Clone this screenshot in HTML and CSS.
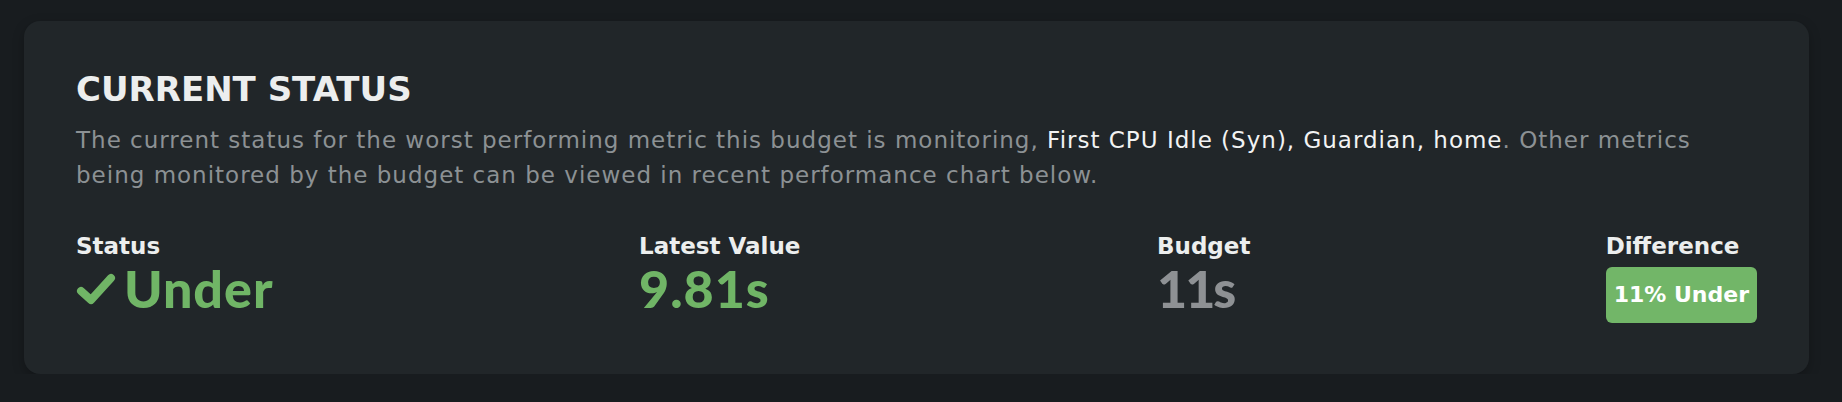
FILE: index.html
```html
<!DOCTYPE html>
<html lang="en">
<head>
  <meta charset="UTF-8">
  <title>Current Status</title>
  <link rel="stylesheet" href="styles.css">
</head>
<body>
  <div class="card">
    <h2>CURRENT STATUS</h2>
    <p class="desc">
      The current status for the worst performing metric this budget is monitoring,
      <span class="hl">First CPU Idle (Syn), Guardian, home</span>. Other metrics
      being monitored by the budget can be viewed in recent performance chart below.
    </p>

    <div class="stats">
      <div class="stat">
        <div class="label">Status</div>
        <div class="value good">
          <svg class="check" width="40" height="34" viewBox="0 0 40 34">
            <polyline points="5,20 15,29 35,7" fill="none" stroke="currentColor" stroke-width="8" stroke-linecap="round" stroke-linejoin="round"/>
          </svg>
          Under
        </div>
      </div>
      <div class="stat">
        <div class="label">Latest Value</div>
        <div class="value good">9.81s</div>
      </div>
      <div class="stat">
        <div class="label">Budget</div>
        <div class="value muted">11s</div>
      </div>
      <div class="stat">
        <div class="label">Difference</div>
        <div class="badge">11% Under</div>
      </div>
    </div>
  </div>
</body>
</html>
```

FILE: styles.css
```css
body {
  font-family: "DejaVu Sans", sans-serif;
  background-color: #181c1f;
  margin: 0;
  padding: 21px 33px 0 24px;
}
.card {
  background: #212629;
  border-radius: 16px;
  padding: 48px 52px 0;
  height: 353px;
  box-sizing: border-box;
  box-shadow: 0 4px 12px rgba(0,0,0,0.25);
}
h2 {
  margin: 0;
  font-size: 34px;
  line-height: 40px;
  font-weight: bold;
  color: #eceeee;
}
.desc {
  margin: 14px 0 0;
  font-size: 23px;
  line-height: 35px;
  letter-spacing: 1px;
  color: #8c9194;
}
.hl {
  color: #f2f3f3;
}
.stats {
  display: grid;
  grid-template-columns: 563px 518px 1fr auto;
  margin-top: 39px;
}
.label {
  font-size: 23px;
  line-height: 28px;
  font-weight: bold;
  color: #eceeee;
}
.value {
  font-family: Lato, "DejaVu Sans", sans-serif;
  font-size: 52px;
  line-height: 56px;
  font-weight: 900;
  letter-spacing: 1px;
  display: flex;
  align-items: center;
  gap: 8px;
}
.good {
  color: #70b566;
}
.muted {
  color: #8e9194;
  letter-spacing: -2px;
}
.check {
  display: block;
}
.badge {
  margin-top: 7px;
  height: 56px;
  line-height: 56px;
  padding: 0 8px;
  border-radius: 6px;
  background: #72b668;
  color: #ffffff;
  font-size: 22px;
  font-weight: bold;
}
```
